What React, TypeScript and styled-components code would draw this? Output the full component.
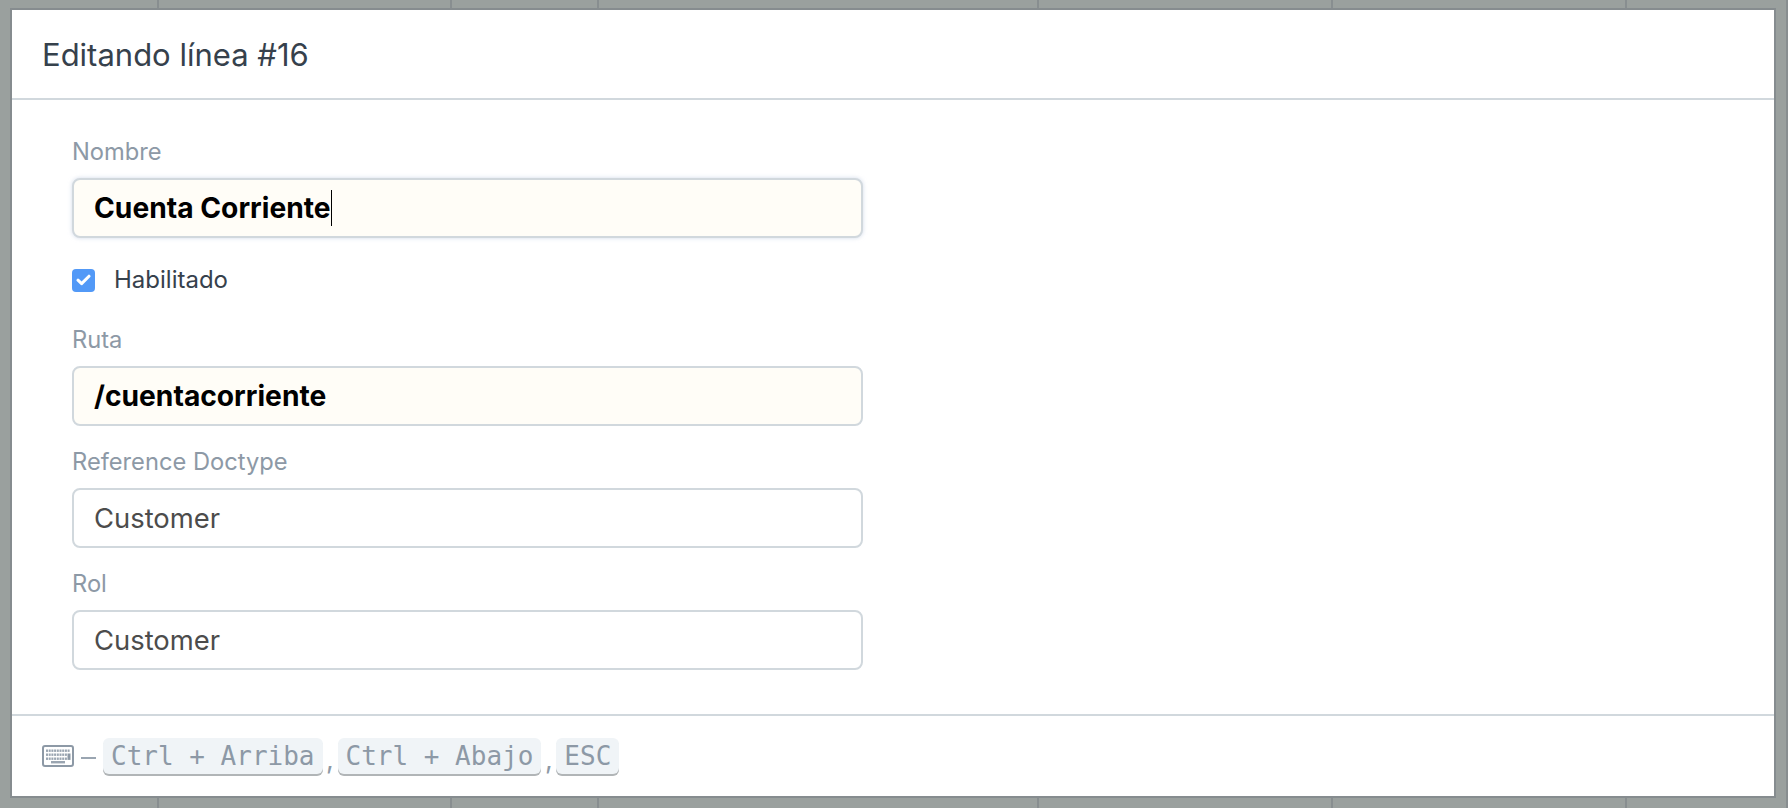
import React from "react";
import styled, { createGlobalStyle } from "styled-components";

const Global = createGlobalStyle`
  html, body { margin: 0; padding: 0; width: 1788px; height: 808px; overflow: hidden; background: #9aa09e; }
  body { font-family: Inter, "Liberation Sans", sans-serif; }
`;
const Page = styled.div`
  position: relative;
  width: 1788px;
  height: 808px;
  background: #9aa09e;
  overflow: hidden;
`;
const Backdrop = styled.div`
  display: flex;
  height: 100%;
`;
const Cell = styled.div<{ $w: number }>`
  width: ${(p) => p.$w}px;
  height: 100%;
  box-sizing: border-box;
  border-right: 2px solid #888e90;
`;
const Modal = styled.div`
  position: absolute;
  left: 10px;
  top: 8px;
  width: 1766px;
  height: 790px;
  box-sizing: border-box;
  border: 2px solid #868c8f;
  background: #fff;
  display: flex;
  flex-direction: column;
`;
const Header = styled.div`
  height: 90px;
  box-sizing: border-box;
  border-bottom: 2px solid #d1d8dd;
  padding: 0 30px;
  display: flex;
  align-items: center;
  flex: none;
`;
const Title = styled.h4`
  margin: 0;
  font-size: 31px;
  font-weight: 400;
  color: #36414c;
  line-height: 1;
`;
const Body = styled.div`
  flex: 1;
  padding: 40px 60px 0;
  display: flex;
  flex-direction: column;
  width: 791px;
  box-sizing: content-box;
`;
const Label = styled.label`
  font-size: 23.7px;
  line-height: 24px;
  height: 24px;
  color: #8d99a6;
  margin-bottom: 14px;
`;
const Input = styled.div<{ $edited?: boolean; $shadow?: boolean; $mb: number }>`
  height: 60px;
  box-sizing: border-box;
  border: 2px solid #d1d8dd;
  border-radius: 8px;
  padding: 0 20px;
  display: flex;
  align-items: center;
  font-size: ${(p) => (p.$edited ? 28.2 : 27.4)}px;
  color: ${(p) => (p.$edited ? "#000" : "#4c4c4c")};
  font-weight: ${(p) => (p.$edited ? 700 : 400)};
  background: ${(p) => (p.$edited ? "#fffdf7" : "#fff")};
  box-shadow: ${(p) => (p.$shadow ? "0 0 4px rgba(180,195,220,0.6)" : "none")};
  margin-bottom: ${(p) => p.$mb}px;
`;
const Caret = styled.span`
  display: inline-block;
  width: 1.5px;
  height: 36px;
  background: #000;
`;
const CheckRow = styled.div`
  display: flex;
  align-items: center;
  height: 24px;
  gap: 19px;
  margin-bottom: 36px;
`;
const Check = styled.span`
  width: 23px;
  height: 23px;
  border-radius: 4px;
  background: #5299f7;
  display: flex;
  align-items: center;
  justify-content: center;
`;
const CheckText = styled.span`
  font-size: 24px;
  color: #36414c;
  line-height: 24px;
`;
const Footer = styled.div`
  height: 82px;
  flex: none;
  box-sizing: border-box;
  border-top: 2px solid #d1d8dd;
  padding: 0 30px;
  display: flex;
  align-items: center;
  color: #8d99a6;
`;
const Dash = styled.span`
  width: 15px;
  height: 2px;
  background: #9aa5b1;
  margin: 4px 7px 0 6px;
  flex: none;
`;
const Comma = styled.span`
  font-size: 27px;
  line-height: 1;
  width: 15px;
  margin-top: 6px;
  text-align: center;
`;
const Key = styled.kbd`
  font-family: "DejaVu Sans Mono", monospace;
  font-size: 26px;
  line-height: 36px;
  height: 36px;
  padding: 0 8px;
  color: #8d99a6;
  background: #f0f4f7;
  border-radius: 6px;
  box-shadow: 0 2px 0 #b1b5b7;
`;

const KeyboardIcon = () => (
  <svg width="33" height="23" viewBox="0 0 33 23" style={{ flex: "none" }}>
    <rect x="1" y="1" width="30" height="20" rx="2" fill="#fff" stroke="#8d99a6" strokeWidth="2" />
    <g fill="#9aa5b1">
      {[0, 1, 2, 3, 4, 5, 6, 7, 8].map((i) => (
        <rect key={`a${i}`} x={4 + i * 2.7} y="4.5" width="2" height="2.4" />
      ))}
      {[0, 1, 2, 3, 4, 5, 6, 7].map((i) => (
        <rect key={`b${i}`} x={4 + i * 2.7} y="8.5" width="2" height="2.4" />
      ))}
      {[0, 1, 2, 3, 4, 5, 6, 7].map((i) => (
        <rect key={`c${i}`} x={4 + i * 2.7} y="12.5" width="2" height="2.4" />
      ))}
      <rect x="9" y="16" width="14" height="2.4" />
    </g>
    <rect x="25.5" y="8.5" width="3" height="6.4" fill="#8d99a6" />
  </svg>
);

export default function App() {
  return (
    <Page>
      <Global />
      <Backdrop>
        {[159, 293, 147, 440, 294, 294, 161].map((w, i) => (
          <Cell key={i} $w={w} />
        ))}
      </Backdrop>
      <Modal>
        <Header>
          <Title>Editando línea #16</Title>
        </Header>
        <Body>
          <Label>Nombre</Label>
          <Input $edited $shadow $mb={30}>
            Cuenta Corriente
            <Caret />
          </Input>
          <CheckRow>
            <Check>
              <svg width="15" height="12" viewBox="0 0 15 12">
                <path d="M2 6.2 L5.6 9.6 L13 2.2" fill="none" stroke="#fff" strokeWidth="3" strokeLinecap="round" strokeLinejoin="round" />
              </svg>
            </Check>
            <CheckText>Habilitado</CheckText>
          </CheckRow>
          <Label>Ruta</Label>
          <Input $edited $mb={24}>/cuentacorriente</Input>
          <Label>Reference Doctype</Label>
          <Input $mb={24}>Customer</Input>
          <Label>Rol</Label>
          <Input $mb={0}>Customer</Input>
        </Body>
        <Footer>
          <KeyboardIcon />
          <Dash />
          <Key>Ctrl + Arriba</Key>
          <Comma>,</Comma>
          <Key>Ctrl + Abajo</Key>
          <Comma>,</Comma>
          <Key>ESC</Key>
        </Footer>
      </Modal>
    </Page>
  );
}
